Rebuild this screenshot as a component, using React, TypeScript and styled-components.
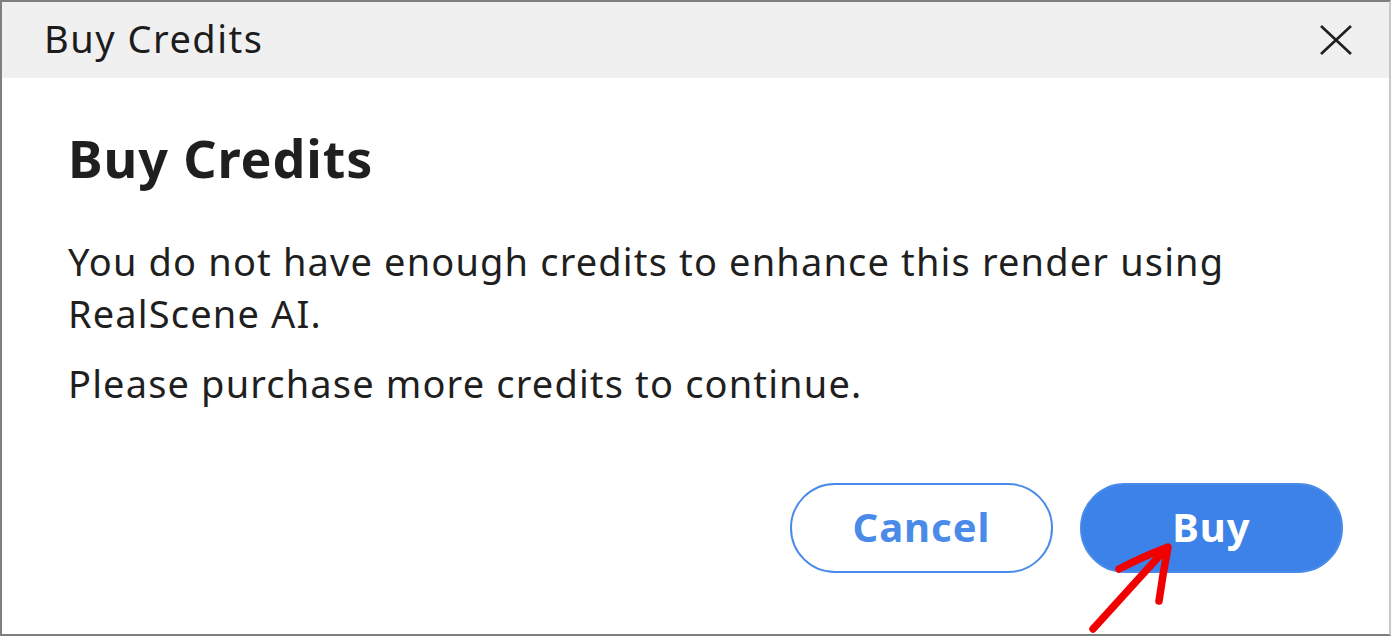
import React from "react";
import styled, { createGlobalStyle } from "styled-components";

const Global = createGlobalStyle`
  html, body { margin: 0; padding: 0; background: #ffffff; }
  * { box-sizing: border-box; }
`;

const Window = styled.div`
  position: relative;
  width: 1391px;
  height: 636px;
  border: 2px solid #7f7f7f;
  border-right-color: #c8c8c8;
  background: #ffffff;
  display: flex;
  flex-direction: column;
  font-family: "Noto Sans", "Open Sans", sans-serif;
  color: #1f1f1f;
  overflow: hidden;
`;

const TitleBar = styled.div`
  height: 76px;
  background: #f0f0f0;
  display: flex;
  align-items: center;
  justify-content: space-between;
  padding: 0 33px 0 42px;
  flex-shrink: 0;
`;

const TitleText = styled.div`
  font-size: 38px;
  letter-spacing: 1.5px;
  font-weight: 400;
  color: #1c1c1c;
  padding-bottom: 4px;
`;

const CloseButton = styled.button`
  width: 40px;
  height: 40px;
  border: none;
  background: transparent;
  padding: 0;
  display: flex;
  align-items: center;
  justify-content: center;
`;

const Content = styled.div`
  flex: 1;
  display: flex;
  flex-direction: column;
  padding: 48px 40px 0 66px;
`;

const Heading = styled.h1`
  margin: 0;
  font-size: 52px;
  letter-spacing: 0.9px;
  font-weight: 700;
  color: #1f1f1f;
  line-height: 64px;
`;

const Paragraph = styled.p<{ $top: number }>`
  margin: ${(p) => p.$top}px 0 0;
  font-size: 38px;
  letter-spacing: 1.15px;
  line-height: 52px;
  color: #1f1f1f;
`;

const Actions = styled.div`
  margin-top: auto;
  margin-bottom: 61px;
  display: flex;
  justify-content: flex-end;
  gap: 27px;
  padding-right: 6px;
`;

const PillButton = styled.button<{ $primary?: boolean }>`
  width: 263px;
  height: 90px;
  border-radius: 45px;
  font-family: "Noto Sans", "Open Sans", sans-serif;
  font-size: 40px;
  letter-spacing: 1px;
  font-weight: 700;
  border: 2px solid #4a8be9;
  background: ${(p) => (p.$primary ? "#3d82e8" : "#ffffff")};
  color: ${(p) => (p.$primary ? "#ffffff" : "#4a8be9")};
  display: flex;
  align-items: center;
  justify-content: center;
  padding: 0 0 4px;
`;

const Annotation = styled.svg`
  position: absolute;
  left: 1080px;
  top: 535px;
  pointer-events: none;
`;

export default function App() {
  return (
    <>
      <Global />
      <Window>
        <TitleBar>
          <TitleText>Buy Credits</TitleText>
          <CloseButton aria-label="Close">
            <svg width="34" height="32" viewBox="0 0 34 32">
              <path d="M2 2 L32 30 M32 2 L2 30" stroke="#1f1f1f" strokeWidth="2.6" fill="none" />
            </svg>
          </CloseButton>
        </TitleBar>
        <Content>
          <Heading>Buy Credits</Heading>
          <Paragraph $top={45}>
            You do not have enough credits to enhance this render using RealScene AI.
          </Paragraph>
          <Paragraph $top={18}>Please purchase more credits to continue.</Paragraph>
          <Actions>
            <PillButton>Cancel</PillButton>
            <PillButton $primary>Buy</PillButton>
          </Actions>
        </Content>
        <Annotation width="100" height="100" viewBox="0 0 100 100">
          <path d="M11 92 L80 16" stroke="#f00000" strokeWidth="7.5" strokeLinecap="round" fill="none" />
          <path d="M37 32 Q60 20 86 10 Q81 36 77 64" stroke="#f00000" strokeWidth="7.5" strokeLinecap="round" strokeLinejoin="round" fill="none" />
        </Annotation>
      </Window>
    </>
  );
}
